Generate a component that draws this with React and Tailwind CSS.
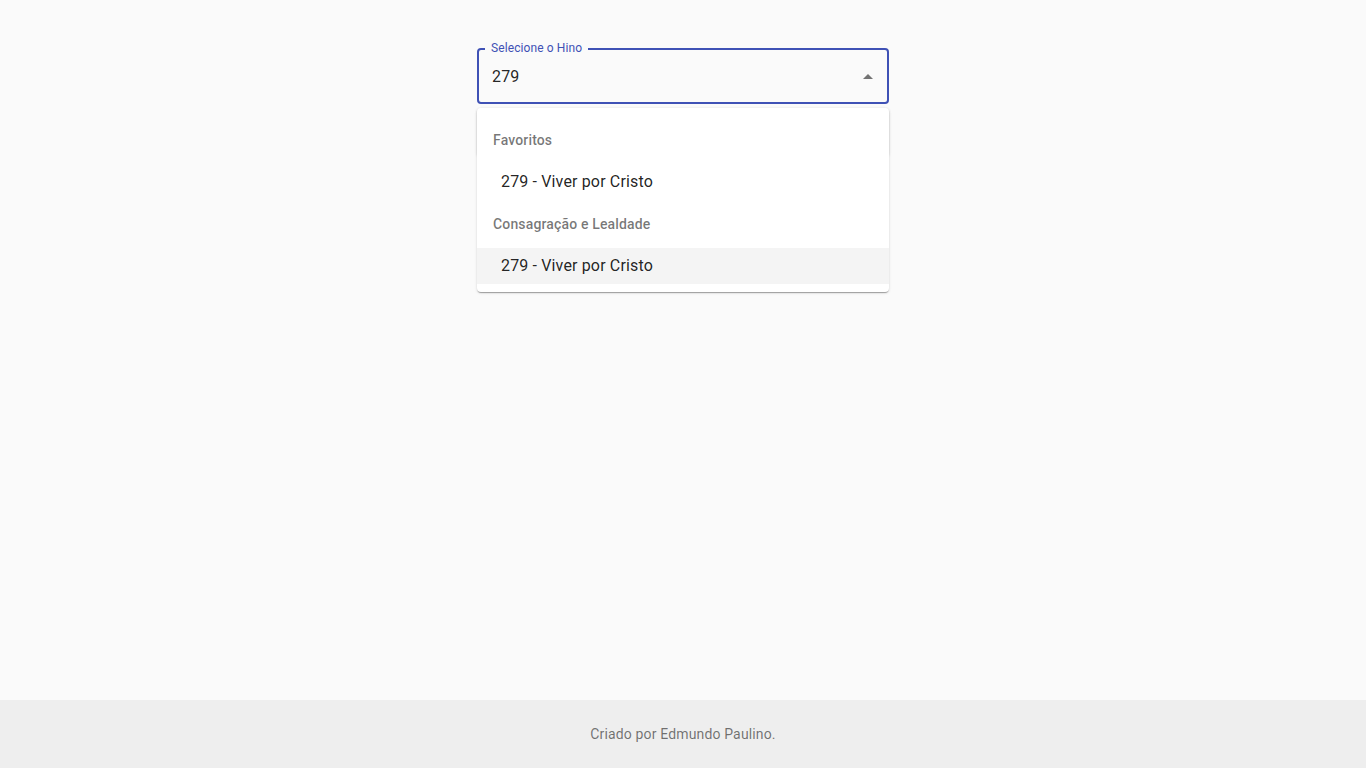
import { useState } from "react";

// ── data ────────────────────────────────────────────────────────────────
const GROUPS = [
  { title: "Favoritos", items: ["279 - Viver por Cristo"] },
  { title: "Consagração e Lealdade", items: ["279 - Viver por Cristo"] },
];

// ── autocomplete field ──────────────────────────────────────────────────
function HinoSelect() {
  const [value] = useState("279");

  return (
    <div className="relative w-[412px]">
      {/* outlined input */}
      <div className="relative h-[56px] rounded-[4px] border-2 border-[#3f51b5]">
        <span className="absolute -top-[10px] left-[6px] bg-[#fafafa] px-[6px] text-[12px] leading-[16px] tracking-[0.1px] text-[#3f51b5]">
          Selecione o Hino
        </span>
        <div className="flex h-full items-center justify-between pl-[13px] pr-[14px] pt-[1px]">
          <span className="text-[16px] tracking-[0.15px] text-[rgba(0,0,0,0.87)]">{value}</span>
          <svg width="10" height="5" viewBox="0 0 10 5">
            <path d="M0 5 L5 0 L10 5 Z" fill="rgba(0,0,0,0.54)" />
          </svg>
        </div>
      </div>

      {/* card hidden behind the popup */}
      <div className="mt-[4px] h-[48px] rounded-[4px] bg-white shadow-[0_2px_1px_-1px_rgba(0,0,0,0.2),0_1px_1px_0_rgba(0,0,0,0.14),0_1px_3px_0_rgba(0,0,0,0.12)]" />

      {/* popup */}
      <div className="absolute left-0 right-0 top-[60px] rounded-[4px] bg-white py-[8px] shadow-[0_2px_1px_-1px_rgba(0,0,0,0.2),0_1px_1px_0_rgba(0,0,0,0.14),0_1px_3px_0_rgba(0,0,0,0.12)]">
        {GROUPS.map((g, gi) => (
          <div key={g.title}>
            <div className="px-[16px] text-[14px] font-medium leading-[48px] tracking-[0.15px] text-[rgba(0,0,0,0.54)]">
              {g.title}
            </div>
            {g.items.map((it) => (
              <div
                key={it}
                className={`flex h-[36px] items-center pl-[24px] text-[16px] tracking-[0.15px] text-[rgba(0,0,0,0.87)] ${gi === 1 ? "bg-[#f4f4f4]" : ""}`}
              >
                {it}
              </div>
            ))}
          </div>
        ))}
      </div>
    </div>
  );
}

// ── root ────────────────────────────────────────────────────────────────
export default function App() {
  return (
    <div
      className="flex min-h-screen flex-col bg-[#fafafa]"
      style={{ fontFamily: "Roboto, 'Noto Sans', sans-serif" }}
    >
      <main className="flex flex-1 justify-center pt-[48px]">
        <HinoSelect />
      </main>

      <footer className="flex h-[68px] items-center justify-center bg-[#eeeeee] text-[14px] tracking-[0.15px] text-[rgba(0,0,0,0.54)]">
        Criado por Edmundo Paulino.
      </footer>
    </div>
  );
}
